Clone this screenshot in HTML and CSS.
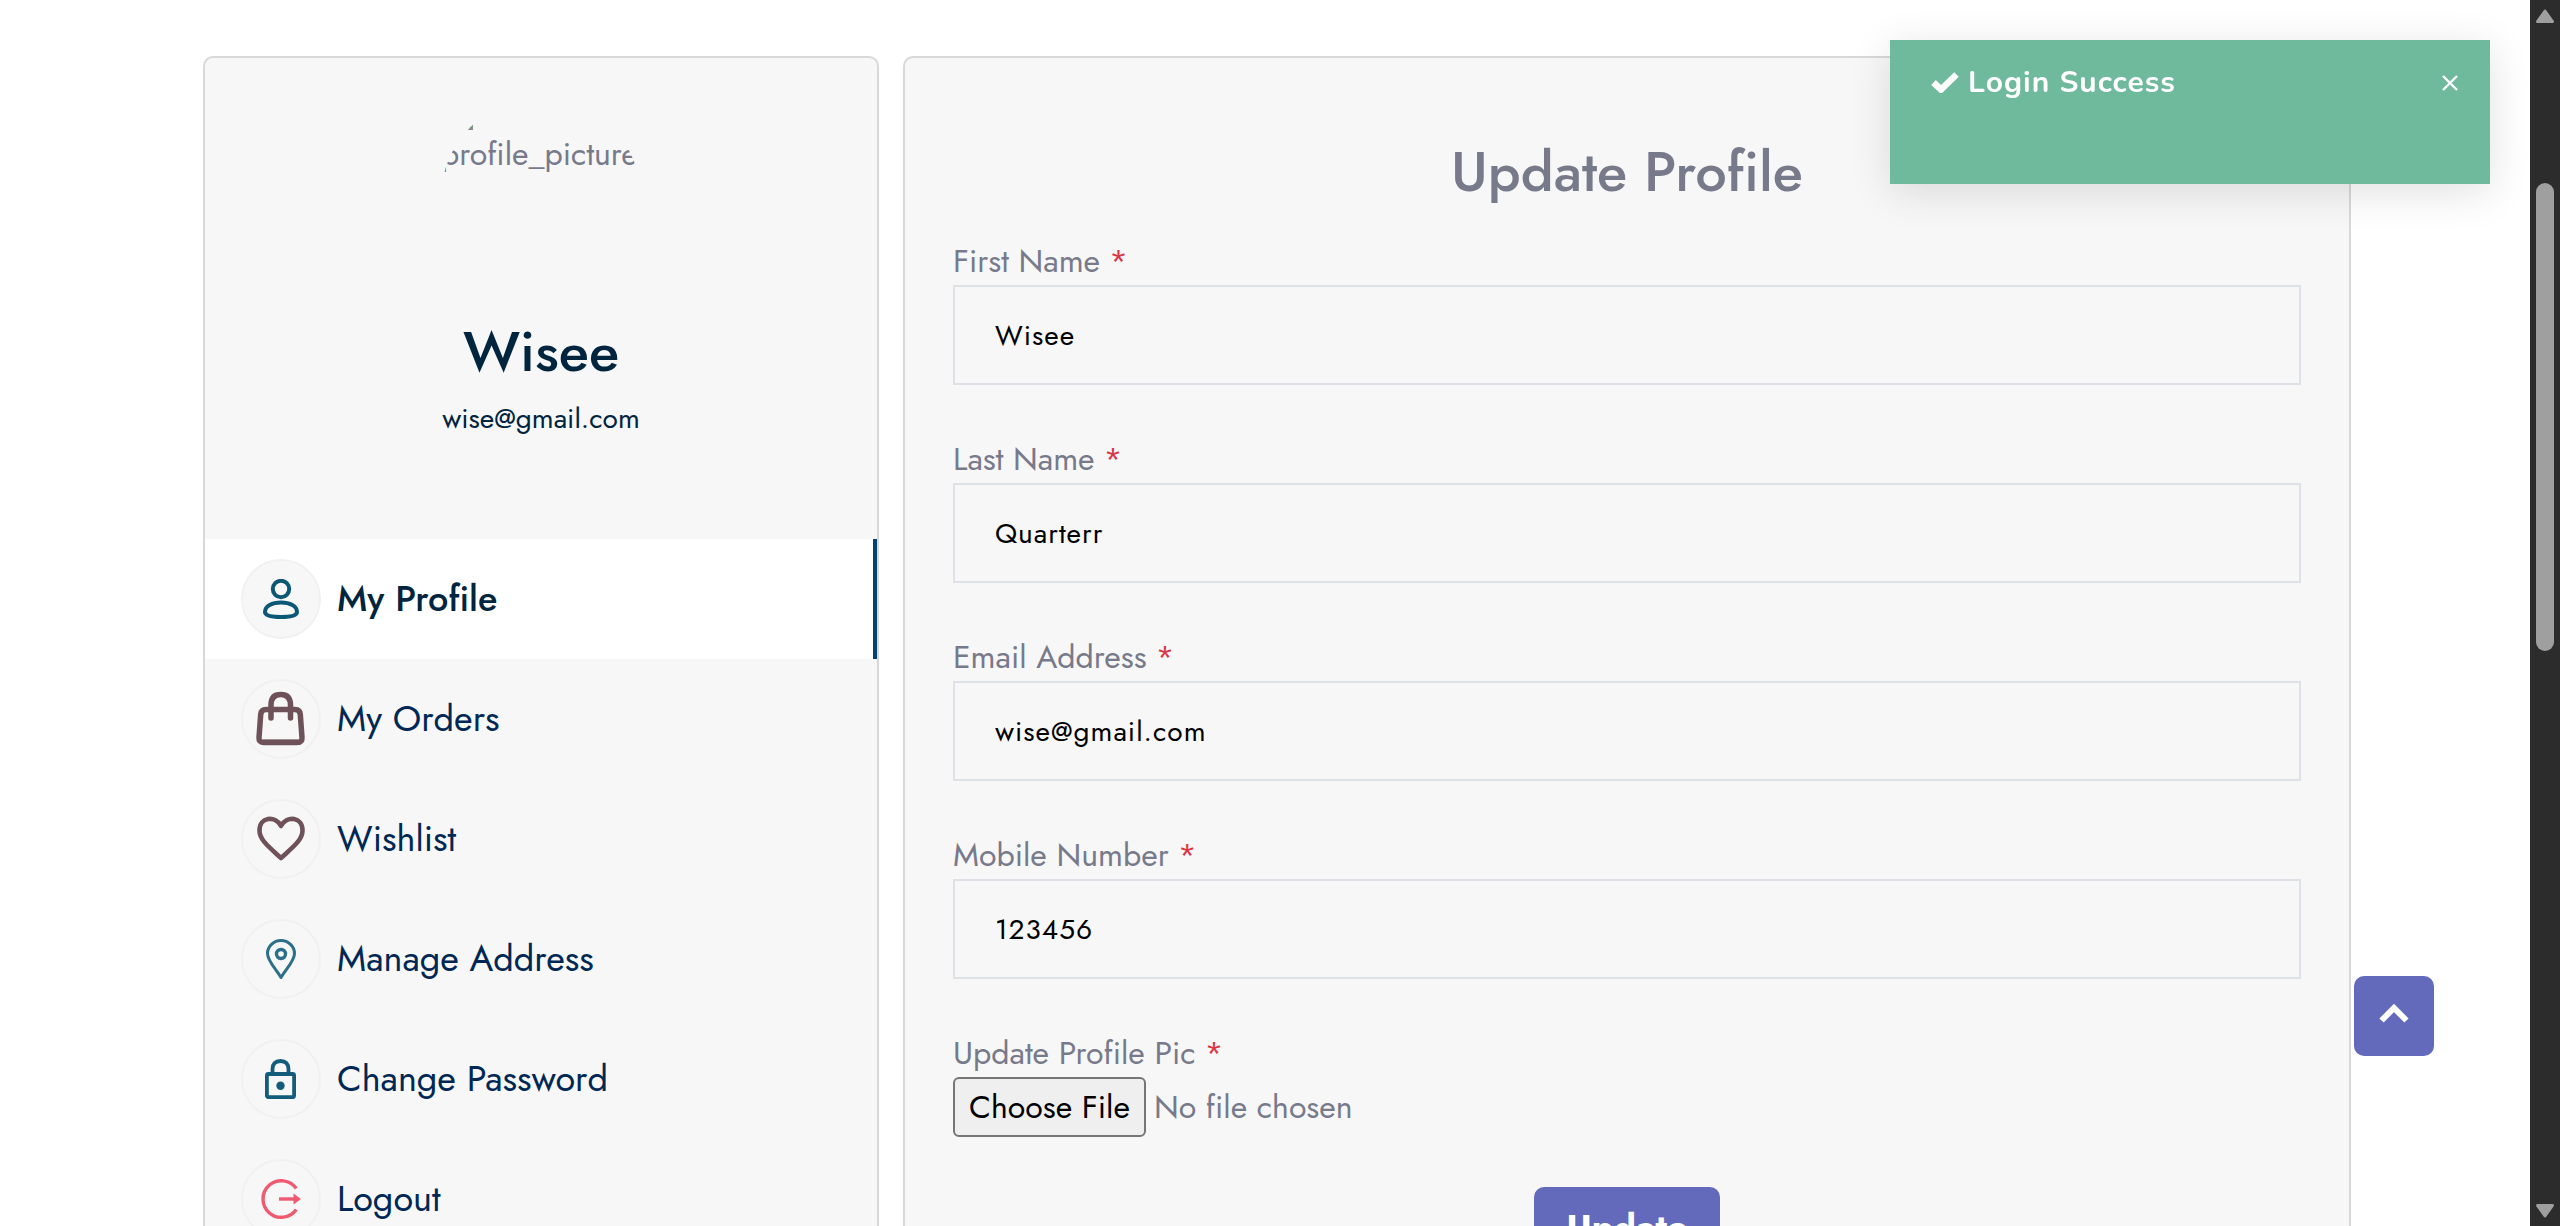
FILE: index.html
```html
<!DOCTYPE html>
<html lang="en">
<head>
<meta charset="utf-8">
<title>Update Profile</title>
<link rel="stylesheet" href="styles.css">
</head>
<body>
<div class="page">
  <aside class="card sidebar">
    <div class="user">
      <div class="avatar">
        <svg class="broken" viewBox="0 0 32 32"><path d="M1 1h20l10 10v20H1z" fill="#fff" stroke="#8a8a8a" stroke-width="2"/><path d="M2 30l10-10 6 5 12-9v14z" fill="#4e9a52"/></svg>
        <span class="avatar-alt">profile_picture</span>
      </div>
      <h2 class="user-name">Wisee</h2>
      <p class="user-mail">wise@gmail.com</p>
    </div>
    <nav class="menu">
      <a class="item active"><span class="disc"><svg width="36" height="40" viewBox="0 0 36 40" fill="none" stroke="#0b5876" stroke-width="4"><circle cx="18" cy="10" r="8.200"/><path d="M2 33C2 27 9 23.500 18 23.500S34 27 34 33c0 3.500-5 5-16 5S2 36.500 2 33z"/></svg></span><span class="item-text">My Profile</span></a>
      <a class="item"><span class="disc"><svg class="bag" width="50" height="56" viewBox="0 0 50 56" fill="none" stroke="#6f5259" stroke-width="5.500" stroke-linecap="round"><path d="M10 18.500h29q5 0 5.300 5l1.700 23q.3 5-4.500 5h-34q-4.800 0-4.500-5l1.700-23q.3-5 5.300-5z"/><path d="M15 27V14q0-10.500 9.700-10.500T34.500 14v13"/><path d="M7 51.300h36"/></svg></span><span class="item-text">My Orders</span></a>
      <a class="item"><span class="disc"><svg width="48" height="46" viewBox="0 0 48 46" fill="none" stroke="#6f5259" stroke-width="4.600" stroke-linejoin="round"><path d="M24 10C18-1 2.500 1 2.500 14.500 2.500 24 12 31 24 42 36 31 45.500 24 45.500 14.500 45.500 1 30-1 24 10z"/></svg></span><span class="item-text">Wishlist</span></a>
      <a class="item"><span class="disc"><svg width="30" height="40" viewBox="0 0 30 40" fill="none" stroke="#2b6f8a" stroke-width="3" stroke-linejoin="round"><path d="M15 38.500C10 30 1.500 22 1.500 14.500a13.500 13 0 0 1 27 0C28.500 22 20 30 15 38.500z"/><circle cx="15" cy="15" r="4.500" stroke-width="3.400"/></svg></span><span class="item-text">Manage Address</span></a>
      <a class="item"><span class="disc"><svg class="lock" width="31" height="40" viewBox="0 0 31 40" fill="none" stroke="#145c7b" stroke-width="3.800"><rect x="1.900" y="15" width="27.200" height="23.200" rx="1.500"/><path d="M7.500 14V10q0-8 8-8t8 8v4"/><circle cx="15.500" cy="26.800" r="4.200" fill="#145c7b" stroke="none"/></svg></span><span class="item-text">Change Password</span></a>
      <a class="item"><span class="disc"><svg width="40" height="40" viewBox="0 0 40 40" fill="none" stroke="#f05a70" stroke-width="3.400"><path d="M35.300 9.500A18.300 18.300 0 1 0 35.300 30.500"/><path d="M18 20H34"/><path d="M32.500 14.500L40 20l-7.500 5.500z" fill="#f05a70" stroke="none"/></svg></span><span class="item-text">Logout</span></a>
    </nav>
  </aside>

  <main class="card form">
    <h1 class="title">Update Profile</h1>
    <div class="field"><div class="label"><span>First Name</span><span class="req">*</span></div><div class="input">Wisee</div></div>
    <div class="field"><div class="label"><span>Last Name</span><span class="req">*</span></div><div class="input">Quarterr</div></div>
    <div class="field"><div class="label"><span>Email Address</span><span class="req">*</span></div><div class="input">wise@gmail.com</div></div>
    <div class="field"><div class="label"><span>Mobile Number</span><span class="req">*</span></div><div class="input">123456</div></div>
    <div class="field upload"><div class="label"><span>Update Profile Pic</span><span class="req">*</span></div>
      <div class="file"><span class="choose">Choose File</span><span>No file chosen</span></div></div>
    <div class="actions"><button class="update">Update</button></div>
  </main>
</div>

<a class="to-top"><svg width="32" height="22" viewBox="0 0 32 22"><path d="M3.500 17.500L16 5l12.500 12.500" fill="none" stroke="#fff" stroke-width="6"/></svg></a>

<div class="toast">
  <svg class="check" width="28" height="22" viewBox="0 0 28 22"><path d="M2.500 11.500l7.500 7L25.500 3.500" fill="none" stroke="#fff" stroke-width="6.600"/></svg>
  <span class="toast-text">Login Success</span>
  <svg class="close" width="18" height="18" viewBox="0 0 18 18"><path d="M2 2l14 14M16 2L2 16" stroke="#fff" stroke-width="2.400"/></svg>
</div>

<div class="scrollbar">
  <svg width="20" height="16" viewBox="0 0 20 16"><path d="M10 3L17.500 13.500H2.500z" fill="#9f9f9f" stroke="#9f9f9f" stroke-width="3" stroke-linejoin="round"/></svg>
  <div class="thumb"></div>
  <svg class="down" width="20" height="16" viewBox="0 0 20 16"><path d="M10 13L17.500 2.500H2.500z" fill="#9f9f9f" stroke="#9f9f9f" stroke-width="3" stroke-linejoin="round"/></svg>
</div>
</body>
</html>
```
FILE: styles.css
```css
* { box-sizing: border-box; }
html, body { height: 100%; overflow: hidden; }
body { margin: 0; background: #fff; color: #777a8b; font: 32px/48px Jost, Lato, sans-serif; }
h1, h2, p { margin: 0; font-weight: 500; }
span { white-space: nowrap; }
svg { display: block; flex: none; }

.page { display: flex; align-items: flex-start; gap: 24px; height: 1226px; padding: 56px 0 0 203px; overflow: hidden; }
.card { background: #f7f7f7; border: 2px solid #d8d8d8; border-radius: 10px; }
.sidebar { width: 676px; height: 1300px; }
.form { width: 1448px; height: 1300px; padding: 0 48px; }

.user { height: 481px; padding-top: 40px; display: flex; flex-direction: column; align-items: center; }
.avatar { width: 200px; height: 200px; border-radius: 50%; overflow: hidden; }
.broken { width: 32px; height: 32px; }
.avatar-alt { display: block; line-height: 48px; }
.user-name { margin-top: 18px; color: #01243f; font-size: 56px; line-height: 72px; }
.user-mail { margin-top: 11px; color: #01243f; font-size: 28px; font-weight: 400; line-height: 40px; }

.item { display: flex; align-items: center; gap: 16px; height: 120px; padding-left: 36px; color: #002855; font-size: 36px; }
.item-text { padding-bottom: 2px; }
.active { background: #fff; border-right: 4px solid #004370; color: #01243f; font-weight: 500; }
.disc { width: 80px; height: 80px; flex: none; border: 2px solid #f1f1f1; border-radius: 50%; background: #f7f7f7; display: flex; align-items: center; justify-content: center; }
.bag, .lock { margin-right: 1px; }

.title { height: 179px; padding-top: 78px; text-align: center; font-size: 56px; line-height: 72px; }
.field { height: 198px; }
.label { display: flex; gap: 9px; height: 48px; }
.req { color: #dc3545; }
.input { height: 100px; padding-left: 40px; border: 2px solid #dee2e6; color: #000; font-size: 28px; line-height: 97px; letter-spacing: 1px; }
.upload { height: 158px; }
.file { display: flex; align-items: center; gap: 8px; height: 60px; }
.choose { width: 193px; height: 60px; display: flex; align-items: center; justify-content: center; border: 2px solid #767676; border-radius: 6px; background: #efefef; color: #000; }
.actions { display: flex; justify-content: center; }
.update { width: 186px; height: 80px; padding: 0; border: 0; border-radius: 10px; background: #636abb; color: #fff; font: 700 36px/80px Jost, Lato, sans-serif; }

.to-top { position: fixed; left: 2354px; top: 976px; width: 80px; height: 80px; display: flex; align-items: center; justify-content: center; padding-bottom: 4px; border-radius: 10px; background: #636abb; }
.toast { position: fixed; left: 1890px; top: 40px; width: 600px; height: 144px; display: flex; align-items: flex-start; padding: 31px 31px 0 41px; background: #6fb99d; box-shadow: 0 8px 40px rgba(0, 0, 0, .12); color: #fff; }
.toast-text { margin: -2px 0 0 9px; font: 700 30px/28px Nunito, "Open Sans", sans-serif; letter-spacing: 1px; }
.close { margin: 3px 0 0 auto; }
.scrollbar { position: fixed; right: 0; top: 0; width: 30px; height: 1226px; padding: 8px 5px 6px; background: #2c2c2c; }
.thumb { width: 18px; height: 468px; margin: 159px 0 0 1px; border-radius: 9px; background: #9f9f9f; }
.down { margin-top: 552px; }
```
